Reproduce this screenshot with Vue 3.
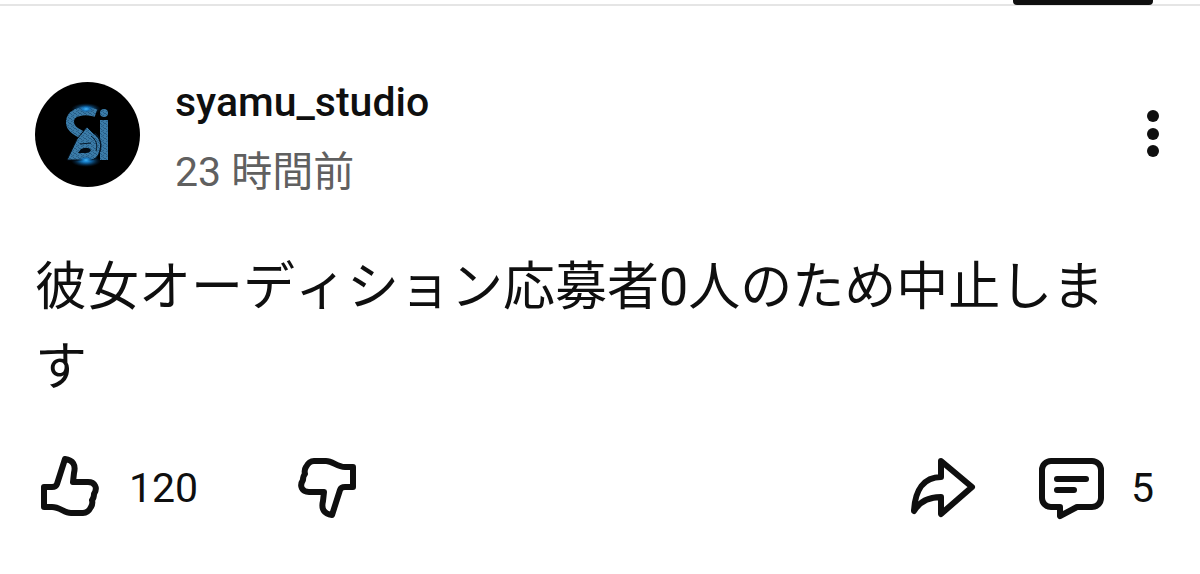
<script setup>
const thumb = 'M5 53V33H13Q17 33 18 30L26 5C34 6 37 11 35 19L34 28H49C56 28 59 34 55 40Q55 44 53 46Q54 50 52 53C50 57 48 59 44 59H32C25 59 21 53 13 53Z'
</script>

<template>
  <main class="page">
    <nav class="tabs" aria-label="チャンネル"><a class="tab" href="#posts" aria-label="投稿" aria-current="page"></a></nav>
    <article class="post">
      <header class="head">
        <a class="avatar" href="#channel" aria-label="syamu_studio">
          <svg viewBox="0 0 105 105" aria-hidden="true">
            <defs>
              <radialGradient id="glow">
                <stop offset="0" stop-color="#4cc3ff" />
                <stop offset="0.35" stop-color="#1688dc" stop-opacity="0.75" />
                <stop offset="1" stop-color="#06315c" stop-opacity="0" />
              </radialGradient>
              <pattern id="grain" width="5" height="5" patternUnits="userSpaceOnUse">
                <rect width="5" height="5" fill="#3b7ca8" />
                <path d="M0 1L2 3M3 0L5 2M1 5L4 3" stroke="#265a84" fill="none" />
              </pattern>
            </defs>
            <circle cx="52.5" cy="52.5" r="52.5" fill="#000" />
            <ellipse cx="51" cy="27" rx="15" ry="6" fill="url(#glow)" />
            <ellipse cx="51" cy="79" rx="15" ry="6" fill="url(#glow)" />
            <g fill="none" stroke="url(#grain)">
              <path d="M61 31C52 28 46 29 41 31C33 35 34 43 38 47C41 50 44 51 47 53" stroke-width="8" />
              <path d="M69 38V78" stroke-width="8" />
            </g>
            <path d="M32 78L42 57L52 45L58 51C64 55 67 60 65 68C64 74 60 78 55 78Z" fill="url(#grain)" stroke="#020a12" stroke-width="1" />
            <path d="M43 71L46 67Q53 64 56 68Q55 71 51 71Z" fill="#020a12" />
            <path d="M45 62L56 61M56 54C61 58 63 62 61 69M60 51C66 56 67 63 65 70" fill="none" stroke="#06192a" stroke-width="1" />
            <circle cx="69" cy="31" r="4" fill="url(#grain)" />
            <ellipse cx="51" cy="27" rx="8" ry="4" fill="url(#glow)" />
            <ellipse cx="51" cy="78" rx="9" ry="4" fill="url(#glow)" />
          </svg>
        </a>
        <div class="meta">
          <a class="name" href="#channel">syamu_studio</a>
          <time class="time">23 時間前</time>
        </div>
        <button class="more" type="button" aria-label="その他">
          <svg width="12" height="48" viewBox="0 0 12 48" fill="currentColor" aria-hidden="true">
            <circle cx="6" cy="6" r="6" /><circle cx="6" cy="24" r="6" /><circle cx="6" cy="41" r="6" />
          </svg>
        </button>
      </header>
      <p class="body">彼女オーディション応募者0人のため中止します</p>
      <footer class="actions">
        <button class="action like" type="button" aria-label="高く評価 120">
          <svg class="icon" width="60" height="64" viewBox="0 2 60 64" aria-hidden="true"><path :d="thumb" /></svg>
          <span>120</span>
        </button>
        <button class="action dislike" type="button" aria-label="低く評価">
          <svg class="icon" width="60" height="64" viewBox="0 0 60 64" aria-hidden="true"><path :d="thumb" transform="rotate(180 30 32)" /></svg>
        </button>
        <button class="action share" type="button" aria-label="共有">
          <svg class="icon" width="68" height="64" viewBox="0 0 68 64" aria-hidden="true">
            <path d="M32 5L63 31L32 58V41C20 41 11 45 5 55C6 34 15 21 32 21Z" />
          </svg>
        </button>
        <button class="action comment" type="button" aria-label="コメント 5">
          <svg class="icon" width="70" height="64" viewBox="0 0 70 64" aria-hidden="true">
            <path d="M14 5H55A9 9 0 0 1 64 14V42A9 9 0 0 1 55 51H40L23 60V51H14A9 9 0 0 1 5 42V14A9 9 0 0 1 14 5Z" />
            <path d="M20 23H49M20 34H37" />
          </svg>
          <span>5</span>
        </button>
      </footer>
    </article>
  </main>
</template>

<style>
body {
  margin: 0;
  background: #fff;
}
</style>

<style scoped>
.page {
  color: #0f0f0f;
  font-family: Roboto, "Noto Sans CJK JP", sans-serif;
  font-size: 41px;
}
.tabs {
  display: flex;
  justify-content: flex-end;
  height: 6px;
  padding-right: 47px;
  background: linear-gradient(#fff 4px, #e5e5e5 4px);
}
.tab {
  width: 140px;
  height: 5px;
  border-radius: 0 0 4px 4px;
  background: #0f0f0f;
}
.post {
  padding: 60px 35px 48px;
}
.head {
  display: flex;
  align-items: center;
  gap: 35px;
}
.avatar,
.avatar svg {
  display: block;
  width: 105px;
  height: 105px;
}
.meta {
  display: flex;
  flex: 1;
  flex-direction: column;
  gap: 10px;
  padding-top: 6px;
}
.name,
.time {
  line-height: 60px;
}
.name {
  color: inherit;
  font-weight: 500;
  text-decoration: none;
}
.time {
  color: #606060;
}
button {
  display: flex;
  align-items: center;
  padding: 0;
  border: 0;
  background: none;
  color: inherit;
  font: inherit;
  cursor: pointer;
}
.more {
  padding: 8px 6px;
}
.body {
  margin: 46px 0 48px;
  padding-right: 20px;
  font-size: 52px;
  font-kerning: none;
  line-height: 80px;
}
.actions {
  display: flex;
  align-items: center;
  padding: 0 11px 0 4px;
}
.icon {
  flex: none;
  fill: none;
  stroke: currentColor;
  stroke-width: 6px;
  stroke-linecap: round;
  stroke-linejoin: round;
}
.like {
  gap: 30px;
}
.dislike {
  margin-left: 100px;
}
.share {
  margin-left: auto;
}
.comment {
  gap: 24px;
  margin-left: 60px;
}
</style>
